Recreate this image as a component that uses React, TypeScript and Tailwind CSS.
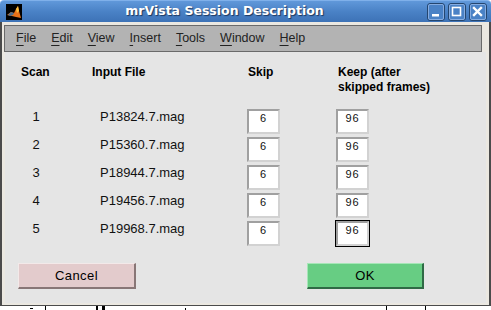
import React from "react";

const rows: [string, string][] = [
  ["1", "P13824.7.mag"],
  ["2", "P15360.7.mag"],
  ["3", "P18944.7.mag"],
  ["4", "P19456.7.mag"],
  ["5", "P19968.7.mag"],
];

const menus: [string, string][] = [
  ["F", "ile"],
  ["E", "dit"],
  ["V", "iew"],
  ["I", "nsert"],
  ["T", "ools"],
  ["W", "indow"],
  ["H", "elp"],
];

function TitleButton({ kind }: { kind: "min" | "max" | "close" }) {
  return (
    <div className="w-[18px] h-[18px] rounded-[3px] border border-[#24466f] bg-[#4a82c6] flex items-center justify-center">
      <div className="w-[16px] h-[16px] rounded-[2px] border border-[#86ace0] flex items-center justify-center">
        <svg width="14" height="14" viewBox="0 0 14 14">
          {kind === "min" && <rect x="3" y="9" width="7" height="2.5" fill="#fff" />}
          {kind === "max" && (
            <rect x="2.5" y="2.5" width="8" height="8" fill="none" stroke="#fff" strokeWidth="1.6" />
          )}
          {kind === "close" && (
            <path d="M3 3 L10 10 M10 3 L3 10" stroke="#fff" strokeWidth="2.4" strokeLinecap="square" />
          )}
        </svg>
      </div>
    </div>
  );
}

function NumBox({ value, focused }: { value: string; focused?: boolean }) {
  return (
    <div
      className={
        "w-[33px] h-[25px] bg-white border-2 border-t-[#a0a0a0] border-l-[#a0a0a0] border-r-[#d2d2d2] border-b-[#d2d2d2] text-center text-[11px] leading-[13px] tracking-[1px] text-[#111] pt-px " +
        (focused ? "outline outline-1 outline-black" : "")
      }
    >
      {value}
    </div>
  );
}

export default function App() {
  return (
    <div className="w-[491px] h-[310px] bg-white overflow-hidden flex flex-col font-['Liberation_Sans',Arial,sans-serif] text-black">
      {/* window */}
      <div className="h-[306px] flex flex-col shrink-0">
        {/* title bar */}
        <div className="h-[22px] shrink-0 rounded-t-[4px] bg-linear-to-b from-[#6098da] via-[#4a82c6] to-[#3d72b6] border-t border-[#7fb0ea] flex items-center">
          <div className="ml-[6px] w-[16px] h-[16px]">
            <svg width="16" height="16" viewBox="0 0 16 16">
              <rect width="16" height="16" fill="#000" />
              <path d="M1 11 L5 8 L8 9 L10 5 L12 2 L13 7 L15 14 L10 13 L6 12 Z" fill="#e8731a" />
              <path d="M10 5 L12 2 L13 7 L11 9 Z" fill="#f5c040" />
              <path d="M2 11 L5 8 L8 9 L7 11 L4 12 Z" fill="#4a6f8f" />
            </svg>
          </div>
          <div className="flex-1 text-center font-['DejaVu_Sans',sans-serif] font-bold text-[12.5px] text-white [text-shadow:1px_1px_1px_#1d375e]">
            mrVista Session Description
          </div>
          <div className="flex gap-[3px] mr-[4px]">
            <TitleButton kind="min" />
            <TitleButton kind="max" />
            <TitleButton kind="close" />
          </div>
        </div>
        {/* frame body */}
        <div className="flex-1 flex flex-col border-x-2 border-b border-[#4b4b4b]">
          <div className="flex-1 flex flex-col border-x-[3px] border-b-2 border-[#ebe8e1] bg-[#ebe8e1]">
            <div className="h-[3px] shrink-0" />
            {/* menu bar */}
            <div className="h-[27px] shrink-0 mr-[4px] -ml-px bg-[#b3b3b3] border border-[#6a6a6a] flex items-center pl-[11px] gap-[15px] text-[12.5px]">
              {menus.map(([a, b]) => (
                <span key={a + b} className="text-[#222]">
                  <span className="underline decoration-1 underline-offset-[3px]">{a}</span>
                  {b}
                </span>
              ))}
            </div>
            {/* content */}
            <div className="flex-1 bg-[#e5e5e5] flex flex-col pt-[13px]">
              <div className="pl-[16px] grid grid-cols-[71px_155px_89px_1fr] font-bold text-[12px] leading-[15px]">
                <div>Scan</div>
                <div>Input File</div>
                <div className="pl-px">Skip</div>
                <div className="pl-[2px]">
                  Keep (after
                  <br />
                  skipped frames)
                </div>
              </div>
              <div className="pl-[16px] mt-[14px] flex flex-col gap-[3px]">
                {rows.map(([n, f], i) => (
                  <div key={n} className="h-[25px] grid grid-cols-[71px_155px_89px_1fr] text-[13px] leading-[15px] text-[#111]">
                    <div className="w-[30px] text-center">{n}</div>
                    <div className="pl-[8px]">{f}</div>
                    <div>
                      <NumBox value="6" />
                    </div>
                    <div>
                      <NumBox value="96" focused={i === 4} />
                    </div>
                  </div>
                ))}
              </div>
              <div className="mt-[17px] pl-[13px] flex text-[13px]">
                <div className="w-[118px] h-[26px] bg-[#e3cbcc] border-t border-l border-t-[#f3e9e9] border-l-[#f3e9e9] border-r-2 border-b-2 border-r-[#887676] border-b-[#887676] flex items-center justify-center tracking-[0.4px]">
                  Cancel
                </div>
                <div className="ml-[171px] w-[117px] h-[26px] bg-[#67cd83] border-t border-l border-t-[#a6e6b7] border-l-[#a6e6b7] border-r-2 border-b-2 border-r-[#2f6a45] border-b-[#2f6a45] flex items-center justify-center tracking-[0.4px]">
                  OK
                </div>
              </div>
            </div>
          </div>
        </div>
      </div>
      {/* fragments of window behind */}
      <div className="flex items-start h-[4px] pl-[30px]">
        <div className="w-[3px] h-[1px] bg-black mt-[2px]" />
        <div className="ml-[12px] w-px h-[4px] bg-black" />
        <div className="ml-[50px] w-[2px] h-[4px] bg-black" />
        <div className="ml-[4px] w-[3px] h-[4px] bg-black" />
        <div className="ml-[80px] w-px h-[2px] bg-black mt-[2px]" />
        <div className="ml-[200px] w-px h-[4px] bg-black" />
        <div className="ml-[38px] w-px h-[4px] bg-black" />
      </div>
    </div>
  );
}
